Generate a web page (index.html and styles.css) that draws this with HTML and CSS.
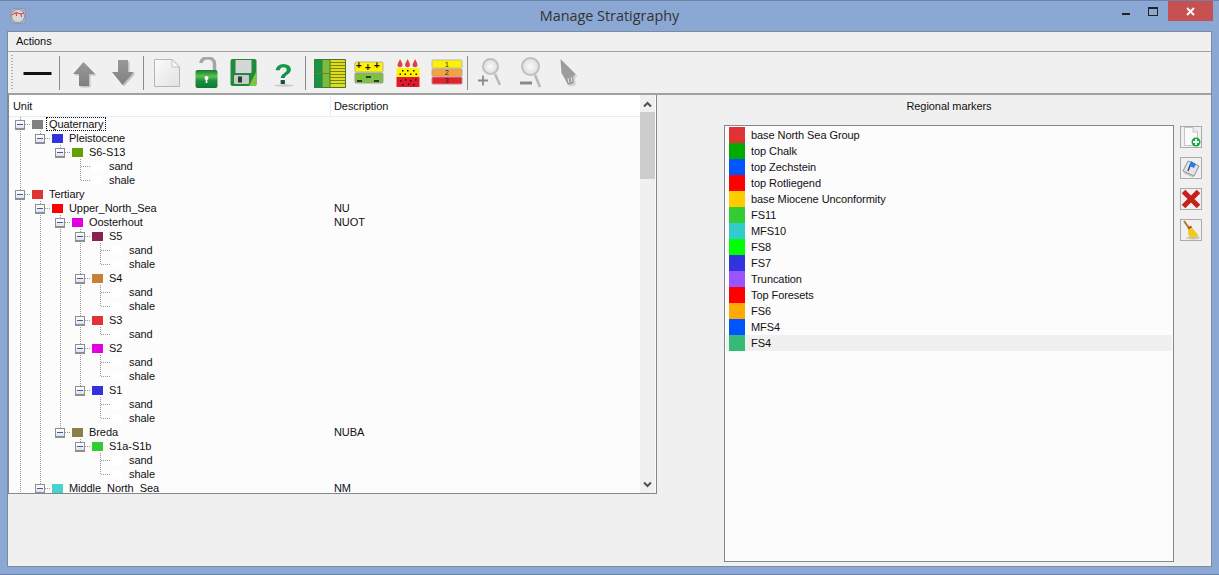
FILE: index.html
```html
<!DOCTYPE html>
<html lang="en">
<head>
  <meta charset="UTF-8">
  <title>Manage Stratigraphy</title>
  <link rel="stylesheet" href="styles.css">
</head>
<body>
<div class="window">

  <!-- title bar -->
  <div class="titlebar">
    <svg class="app-icon" width="16" height="16" viewBox="0 0 16 16">
      <rect x="0.5" y="0.5" width="15" height="15" rx="2" fill="#9fb0c9" stroke="#8a9ab2"/>
      <circle cx="8" cy="8" r="6.5" fill="#d8d8d8" stroke="#999"/>
      <path d="M2 7 L6 4.5 L11 6 L14 5 M6 4.5 L6.5 8 M11 6 L11.5 9" fill="none" stroke="#d8343a" stroke-width="1"/>
    </svg>
    <div class="title">Manage Stratigraphy</div>
    <div class="controls">
      <div class="ctl"><span class="ctl-min"></span></div>
      <div class="ctl"><span class="ctl-max"></span></div>
      <div class="ctl-close">
        <svg width="9" height="9" viewBox="0 0 9 9"><path d="M1 1 L8 8 M8 1 L1 8" stroke="#fff" stroke-width="2"/></svg>
      </div>
    </div>
  </div>

  <div class="client">
    <div class="menubar"><span>Actions</span></div>

    <!-- toolbar -->
    <div class="toolbar">
      <svg width="0" height="0" class="defs">
        <defs>
          <linearGradient id="arrowFill" x1="0" y1="0" x2="0" y2="1"><stop offset="0" stop-color="#999"/><stop offset="1" stop-color="#808080"/></linearGradient>
          <linearGradient id="pageFill" x1="0" y1="0" x2="1" y2="1"><stop offset="0" stop-color="#fbfbfb"/><stop offset="1" stop-color="#e2e2e2"/></linearGradient>
          <linearGradient id="lockFill" x1="0" y1="0" x2="0" y2="1"><stop offset="0" stop-color="#0f7a35"/><stop offset=".35" stop-color="#5cc04f"/><stop offset=".6" stop-color="#1a8f3f"/><stop offset="1" stop-color="#0f7a35"/></linearGradient>
          <linearGradient id="helpFill" x1="0" y1="0" x2="0" y2="1"><stop offset="0" stop-color="#12a84c"/><stop offset=".6" stop-color="#128c42"/><stop offset=".75" stop-color="#1a4f30"/><stop offset="1" stop-color="#1a4f30"/></linearGradient>
          <radialGradient id="lensFill"><stop offset="0" stop-color="#fafafa"/><stop offset="1" stop-color="#dedede"/></radialGradient>
        </defs>
      </svg>
      <div class="handle"></div>
      <div class="tool">
        <svg width="32" height="32" viewBox="0 0 32 32"><rect x="1.5" y="15" width="28" height="3" fill="#111"/></svg>
      </div>
      <div class="sep"></div>
      <div class="tool">
        <svg width="32" height="32" viewBox="0 0 32 32"><path d="M15.5 6 L27 18 L21 18 L21 30 L11 30 L11 18 L5 18 Z" fill="#c4c4c4" transform="translate(1.5 .5)"/><path d="M15.5 5 L27 17 L21 17 L21 29 L11 29 L11 17 L5 17 Z" fill="url(#arrowFill)"/></svg>
      </div>
      <div class="tool">
        <svg width="32" height="32" viewBox="0 0 32 32"><path d="M11 4 L21 4 L21 16 L27 16 L15.5 29 L5 16 L11 16 Z" fill="#c4c4c4" transform="translate(1.5 .5)"/><path d="M11 3 L21 3 L21 15 L27 15 L15.5 28 L5 15 L11 15 Z" fill="url(#arrowFill)"/></svg>
      </div>
      <div class="sep sep-tight"></div>
      <div class="tool">
        <svg width="32" height="32" viewBox="0 0 32 32"><path d="M3.5 2.500 L21 2.500 L28.500 10 L28.500 29.500 L3.500 29.500 Z" fill="url(#pageFill)" stroke="#b5b5b5"/><path d="M21 2.500 L21 10 L28.500 10 Z" fill="#f8f8f8" stroke="#c4c4c4"/></svg>
      </div>
      <div class="tool">
        <svg width="32" height="32" viewBox="0 0 32 32"><path d="M11 6 C11 -1 24.500 -1 24.500 7 L24.500 14" fill="none" stroke="#a6a6a6" stroke-width="3.500"/><rect x="5.500" y="13" width="22" height="18" rx="2" fill="url(#lockFill)"/><circle cx="16.500" cy="21" r="2" fill="#fff"/><rect x="15.700" y="21" width="1.600" height="5" fill="#fff"/></svg>
      </div>
      <div class="tool">
        <svg width="32" height="32" viewBox="0 0 32 32"><rect x="1.500" y="2" width="26" height="27" rx="2" fill="#1f8a3c"/><path d="M20 29 L27.500 14 L27.500 27 Q27.500 29 25.500 29 Z" fill="#7cc642"/><rect x="6.500" y="3" width="16" height="13" fill="#d6d6d6"/><rect x="5" y="18" width="15" height="9" rx="1" fill="#c9c9c9"/><rect x="9" y="19.500" width="4" height="6" fill="#23402c"/></svg>
      </div>
      <div class="tool">
        <svg width="32" height="32" viewBox="0 0 32 32"><ellipse cx="16" cy="28.500" rx="10" ry="1.200" fill="#c9c9c9"/><text x="15.500" y="27" text-anchor="middle" class="help-mark" fill="url(#helpFill)">?</text></svg>
      </div>
      <div class="sep"></div>
      <div class="tool">
        <svg width="32" height="32" viewBox="0 0 32 32">
          <rect x="0" y="2" width="8" height="29" fill="#169447"/>
          <rect x="8" y="2" width="8" height="29" fill="#7dbb3c"/>
          <rect x="16" y="2" width="16" height="29" fill="#e2dc1c"/>
          <path d="M0 16.500 H16 M16 5.500 H32 M16 8.500 H32 M16 11.500 H32 M16 14.500 H32 M16 17.500 H32 M16 20.500 H32 M16 23.500 H32 M16 26.500 H32" stroke="#7a8410" stroke-width="1" fill="none"/>
          <path d="M.5 2.500 H31.500 V30.500 H.5 Z M8 2 V31 M16 2 V31" stroke="#3f7a35" stroke-width="1" fill="none"/>
        </svg>
      </div>
      <div class="tool">
        <svg width="32" height="32" viewBox="0 0 32 32">
          <rect x="2" y="5" width="28" height="10" rx="1" fill="#fff200" stroke="#b5b5a0"/>
          <rect x="2" y="16" width="28" height="10" rx="1" fill="#7cc142" stroke="#9aa08a"/>
          <text x="6" y="12" text-anchor="middle" class="layer-sign">+</text>
          <text x="15" y="14" text-anchor="middle" class="layer-sign">+</text>
          <text x="24" y="12" text-anchor="middle" class="layer-sign">+</text>
          <path d="M4 24 H9 M13 20 H18 M21 24 H26" stroke="#111" stroke-width="1.500"/>
        </svg>
      </div>
      <div class="tool">
        <svg width="32" height="32" viewBox="0 0 32 32">
          <rect x="4.500" y="11" width="23" height="9" fill="#fff200"/>
          <rect x="4.500" y="20" width="23" height="10" fill="#e3182d"/>
          <path d="M8 2 C9.500 5 10.500 6.500 10.500 8 C10.500 11 5.500 11 5.500 8 C5.500 6.500 7 5 8 2 Z M15.500 2 C17 5 18 6.500 18 8 C18 11 13 11 13 8 C13 6.500 14.500 5 15.500 2 Z M23 2 C24.500 5 25.500 6.500 25.500 8 C25.500 11 20.500 11 20.500 8 C20.500 6.500 22 5 23 2 Z" fill="#d9453c"/>
          <path d="M10 13h1.500v1.500H10z M15 13h1.500v1.500H15z M21 13h1.500v1.500H21z M7.500 16.500h1.500V18H7.500z M12.500 16.500h1.500V18h-1.500z M18 16.500h1.500V18H18z M23.500 16.500h1.500V18h-1.500z M8 23h1.500v1.500H8z M13 22h1.500v1.500H13z M18 23h1.500v1.500H18z M23 22h1.500v1.500H23z M10 27h1.500v1.500H10z M16 26.500h1.500V28H16z M21 27h1.500v1.500H21z" fill="#111"/>
        </svg>
      </div>
      <div class="tool">
        <svg width="32" height="32" viewBox="0 0 32 32">
          <rect x="1" y="3" width="30" height="8" rx="1" fill="#fff200" stroke="#b9b9a8"/>
          <rect x="1" y="12" width="30" height="7" rx="1" fill="#f6a13c" stroke="#b9a48a"/>
          <rect x="1" y="20" width="30" height="7" rx="1" fill="#e8202a" stroke="#b98a8a"/>
          <text x="16" y="10" text-anchor="middle" class="layer-num">1</text>
          <text x="16" y="18" text-anchor="middle" class="layer-num">2</text>
          <text x="16" y="26" text-anchor="middle" class="layer-num">3</text>
        </svg>
      </div>
      <div class="sep sep-tight"></div>
      <div class="tool">
        <svg width="32" height="32" viewBox="0 0 32 32"><circle cx="15.500" cy="9.500" r="7.500" fill="url(#lensFill)" stroke="#c0c0c0" stroke-width="2"/><path d="M20 17 L25 28" stroke="#b8b8b8" stroke-width="2.500"/><path d="M3 23.500 H13 M8 18.500 V28.500" stroke="#8a8a8a" stroke-width="1.800"/></svg>
      </div>
      <div class="tool">
        <svg width="32" height="32" viewBox="0 0 32 32"><circle cx="16.500" cy="9.500" r="8.500" fill="url(#lensFill)" stroke="#c0c0c0" stroke-width="2"/><path d="M21 18 L26 30" stroke="#b8b8b8" stroke-width="2.500"/><path d="M6 26 H18" stroke="#8a8a8a" stroke-width="3"/></svg>
      </div>
      <div class="tool">
        <svg width="32" height="32" viewBox="0 0 32 32"><path d="M8.500 3 L23.500 18 L21 21 L22 27 L16 29 L13 23 L9.500 17 Z" fill="#d4d4d4" transform="translate(1 1)"/><path d="M7.500 2 L22.500 17 L20 20 L21 26 L15 28 L12 22 L8.500 16 Z" fill="#9c9c9c"/><path d="M15 21 L16 26 M18 20 L19 25" stroke="#e6e6e6" stroke-width="1"/></svg>
      </div>
    </div>

    <div class="main">
      <!-- stratigraphy tree -->
      <div class="tree-panel">
        <div class="tree">
          <div class="tree-head">
            <div class="col-unit">Unit</div>
            <div class="col-desc">Description</div>
          </div>
          <div class="tree-body">
            <div class="row"><i class="cell tee"><b class="exp"></b></i><span class="swatch" style="background:#808080"></span><span class="label focus">Quaternary</span></div>
            <div class="row"><i class="cell line"></i><i class="cell ell"><b class="exp"></b></i><span class="swatch" style="background:#3333dd"></span><span class="label">Pleistocene</span></div>
            <div class="row"><i class="cell line"></i><i class="cell"></i><i class="cell ell"><b class="exp"></b></i><span class="swatch" style="background:#66a000"></span><span class="label">S6-S13</span></div>
            <div class="row"><i class="cell line"></i><i class="cell"></i><i class="cell"></i><i class="cell tee"></i><span class="swatch white"></span><span class="label">sand</span></div>
            <div class="row"><i class="cell line"></i><i class="cell"></i><i class="cell"></i><i class="cell ell"></i><span class="swatch white"></span><span class="label">shale</span></div>

            <div class="row"><i class="cell tee"><b class="exp"></b></i><span class="swatch" style="background:#e03333"></span><span class="label">Tertiary</span></div>
            <div class="row"><i class="cell line"></i><i class="cell tee"><b class="exp"></b></i><span class="swatch" style="background:#ff0000"></span><span class="label">Upper_North_Sea</span><span class="desc">NU</span></div>
            <div class="row"><i class="cell line"></i><i class="cell line"></i><i class="cell tee"><b class="exp"></b></i><span class="swatch" style="background:#e000e0"></span><span class="label">Oosterhout</span><span class="desc">NUOT</span></div>

            <div class="row"><i class="cell line"></i><i class="cell line"></i><i class="cell line"></i><i class="cell tee"><b class="exp"></b></i><span class="swatch" style="background:#8a2050"></span><span class="label">S5</span></div>
            <div class="row"><i class="cell line"></i><i class="cell line"></i><i class="cell line"></i><i class="cell line"></i><i class="cell tee"></i><span class="swatch white"></span><span class="label">sand</span></div>
            <div class="row"><i class="cell line"></i><i class="cell line"></i><i class="cell line"></i><i class="cell line"></i><i class="cell ell"></i><span class="swatch white"></span><span class="label">shale</span></div>

            <div class="row"><i class="cell line"></i><i class="cell line"></i><i class="cell line"></i><i class="cell tee"><b class="exp"></b></i><span class="swatch" style="background:#c88038"></span><span class="label">S4</span></div>
            <div class="row"><i class="cell line"></i><i class="cell line"></i><i class="cell line"></i><i class="cell line"></i><i class="cell tee"></i><span class="swatch white"></span><span class="label">sand</span></div>
            <div class="row"><i class="cell line"></i><i class="cell line"></i><i class="cell line"></i><i class="cell line"></i><i class="cell ell"></i><span class="swatch white"></span><span class="label">shale</span></div>

            <div class="row"><i class="cell line"></i><i class="cell line"></i><i class="cell line"></i><i class="cell tee"><b class="exp"></b></i><span class="swatch" style="background:#e03333"></span><span class="label">S3</span></div>
            <div class="row"><i class="cell line"></i><i class="cell line"></i><i class="cell line"></i><i class="cell line"></i><i class="cell ell"></i><span class="swatch white"></span><span class="label">sand</span></div>

            <div class="row"><i class="cell line"></i><i class="cell line"></i><i class="cell line"></i><i class="cell tee"><b class="exp"></b></i><span class="swatch" style="background:#e000e0"></span><span class="label">S2</span></div>
            <div class="row"><i class="cell line"></i><i class="cell line"></i><i class="cell line"></i><i class="cell line"></i><i class="cell tee"></i><span class="swatch white"></span><span class="label">sand</span></div>
            <div class="row"><i class="cell line"></i><i class="cell line"></i><i class="cell line"></i><i class="cell line"></i><i class="cell ell"></i><span class="swatch white"></span><span class="label">shale</span></div>

            <div class="row"><i class="cell line"></i><i class="cell line"></i><i class="cell line"></i><i class="cell ell"><b class="exp"></b></i><span class="swatch" style="background:#3333dd"></span><span class="label">S1</span></div>
            <div class="row"><i class="cell line"></i><i class="cell line"></i><i class="cell line"></i><i class="cell"></i><i class="cell tee"></i><span class="swatch white"></span><span class="label">sand</span></div>
            <div class="row"><i class="cell line"></i><i class="cell line"></i><i class="cell line"></i><i class="cell"></i><i class="cell ell"></i><span class="swatch white"></span><span class="label">shale</span></div>

            <div class="row"><i class="cell line"></i><i class="cell line"></i><i class="cell ell"><b class="exp"></b></i><span class="swatch" style="background:#8a8048"></span><span class="label">Breda</span><span class="desc">NUBA</span></div>
            <div class="row"><i class="cell line"></i><i class="cell line"></i><i class="cell"></i><i class="cell ell"><b class="exp"></b></i><span class="swatch" style="background:#33cc33"></span><span class="label">S1a-S1b</span></div>
            <div class="row"><i class="cell line"></i><i class="cell line"></i><i class="cell"></i><i class="cell"></i><i class="cell tee"></i><span class="swatch white"></span><span class="label">sand</span></div>
            <div class="row"><i class="cell line"></i><i class="cell line"></i><i class="cell"></i><i class="cell"></i><i class="cell ell"></i><span class="swatch white"></span><span class="label">shale</span></div>

            <div class="row"><i class="cell line"></i><i class="cell tee"><b class="exp"></b></i><span class="swatch" style="background:#48d4cc"></span><span class="label">Middle_North_Sea</span><span class="desc">NM</span></div>
          </div>
          <div class="scrollbar">
            <svg class="chevron" width="9" height="7" viewBox="0 0 9 7"><path d="M1 5.500 L4.500 2 L8 5.500" fill="none" stroke="#505050" stroke-width="2"/></svg>
            <div class="thumb"></div>
            <svg class="chevron chevron-down" width="9" height="7" viewBox="0 0 9 7"><path d="M1 1.500 L4.500 5 L8 1.500" fill="none" stroke="#505050" stroke-width="2"/></svg>
          </div>
        </div>
      </div>

      <!-- regional markers -->
      <div class="markers">
        <div class="markers-title">Regional markers</div>
        <div class="markers-body">
          <div class="marker-list">
            <div class="marker"><span class="marker-color" style="background:#e03333"></span>base North Sea Group</div>
            <div class="marker"><span class="marker-color" style="background:#00aa00"></span>top Chalk</div>
            <div class="marker"><span class="marker-color" style="background:#0055ff"></span>top Zechstein</div>
            <div class="marker"><span class="marker-color" style="background:#ff0000"></span>top Rotliegend</div>
            <div class="marker"><span class="marker-color" style="background:#ffcc00"></span>base Miocene Unconformity</div>
            <div class="marker"><span class="marker-color" style="background:#33cc33"></span>FS11</div>
            <div class="marker"><span class="marker-color" style="background:#33cccc"></span>MFS10</div>
            <div class="marker"><span class="marker-color" style="background:#00ff00"></span>FS8</div>
            <div class="marker"><span class="marker-color" style="background:#3333dd"></span>FS7</div>
            <div class="marker"><span class="marker-color" style="background:#9955ff"></span>Truncation</div>
            <div class="marker"><span class="marker-color" style="background:#ff0000"></span>Top Foresets</div>
            <div class="marker"><span class="marker-color" style="background:#ffaa00"></span>FS6</div>
            <div class="marker"><span class="marker-color" style="background:#0055ff"></span>MFS4</div>
            <div class="marker selected"><span class="marker-color" style="background:#33bb77"></span>FS4</div>
          </div>
          <div class="side-buttons">
            <div class="side-btn">
              <svg width="20" height="20" viewBox="0 0 20 20"><path d="M3.500 .500 L12 .500 L16.500 5 L16.500 18.500 L3.500 18.500 Z" fill="#fafafa" stroke="#c4c4c4"/><path d="M12 .500 L12 5 L16.500 5" fill="#eee" stroke="#c4c4c4"/><circle cx="15" cy="15" r="4.500" fill="#16a83c"/><path d="M15 12 V18 M12 15 H18" stroke="#fff" stroke-width="1.800"/></svg>
            </div>
            <div class="side-btn">
              <svg width="20" height="20" viewBox="0 0 20 20"><path d="M7 3 L18 8 L13 18 L2 13 Z" fill="#e4e4e4" stroke="#8f8f8f"/><path d="M3 15 L13 19" stroke="#b5b5b5"/><path d="M7 13 L10 5" stroke="#1d4fb5" stroke-width="1.500"/><path d="M10 3 L15 6 L13 10 L8.500 8 Z" fill="#2a7de0"/></svg>
            </div>
            <div class="side-btn">
              <svg width="20" height="20" viewBox="0 0 20 20"><path d="M2.500 2.500 L17.500 17.500 M17.500 2.500 L2.500 17.500" stroke="#c8201c" stroke-width="5"/></svg>
            </div>
            <div class="side-btn">
              <svg width="20" height="20" viewBox="0 0 20 20"><ellipse cx="12" cy="18" rx="7" ry="1.500" fill="#c5c5c5"/><path d="M3 1 L8 8" stroke="#a87a30" stroke-width="2"/><path d="M7 8.500 L10.500 6.500 L18 16.500 L8.500 18 L7 13 Z" fill="#f0c828"/><path d="M7 8.500 L10.500 6.500" stroke="#c83030" stroke-width="2"/></svg>
            </div>
          </div>
        </div>
      </div>
    </div>
  </div>
</div>
</body>
</html>
```

FILE: styles.css
```css
html, body {
  margin: 0;
  padding: 0;
  height: 100%;
  overflow: hidden;
}

body {
  font-family: "Liberation Sans", Arial, sans-serif;
  font-size: 11px;
  letter-spacing: -0.07px;
  color: #111;
}

.window {
  height: 100%;
  box-sizing: border-box;
  display: flex;
  flex-direction: column;
  background: #8aa8d3;
  border-top: 1px solid #6a83aa;
  border-bottom: 1px solid #6a83aa;
  padding: 0 7px 7px 7px;
}

/* title bar */
.titlebar {
  height: 30px;
  flex: none;
  display: flex;
  align-items: flex-start;
  position: relative;
}

.app-icon {
  margin: 7px 0 0 3px;
}

.title {
  position: absolute;
  left: 0;
  right: 0;
  top: 5px;
  text-align: center;
  font-family: "Open Sans", sans-serif;
  font-size: 14.4px;
  letter-spacing: 0;
  line-height: 19px;
  color: #333;
}

.controls {
  margin-left: auto;
  display: flex;
}

.ctl {
  width: 26px;
  height: 20px;
  position: relative;
}

.ctl-min {
  position: absolute;
  left: 3px;
  top: 12px;
  width: 8px;
  height: 2px;
  background: #222;
}

.ctl-max {
  position: absolute;
  left: 3px;
  top: 6px;
  width: 8px;
  height: 6px;
  border: 1px solid #222;
  border-top-width: 2px;
}

.ctl-close {
  width: 45px;
  height: 20px;
  margin-left: -3px;
  margin-right: -1px;
  background: #c75050;
  display: flex;
  align-items: center;
  justify-content: center;
}

/* client area */
.client {
  flex: 1;
  min-height: 0;
  display: flex;
  flex-direction: column;
  background: #f0f0f0;
  border: 1px solid #7d8a9c;
}

.menubar {
  height: 19px;
  flex: none;
  line-height: 19px;
  padding-left: 8px;
  border-bottom: 1px solid #a0a0a0;
}

.toolbar {
  height: 43px;
  flex: none;
  box-sizing: border-box;
  display: flex;
  align-items: flex-start;
  padding: 5px 0 0 3px;
  border-bottom: 2px solid #a0a0a0;
}

.defs {
  position: absolute;
}

.handle {
  width: 2px;
  height: 35px;
  margin-right: 5px;
  background: repeating-linear-gradient(#b0b0b0 0 1px, transparent 1px 3px);
  margin-top: -2px;
}

.tool {
  width: 39px;
  height: 32px;
  display: flex;
  justify-content: center;
}

.tool svg {
  filter: blur(0.35px);
}

.sep {
  width: 1px;
  height: 34px;
  margin: -1px 4px 0 2px;
  background: #8c8c8c;
}

.sep-tight {
  margin-left: 1px;
  margin-right: 3px;
}

.help-mark {
  font-family: "Liberation Sans", sans-serif;
  font-weight: bold;
  font-size: 30px;
}

.layer-sign {
  font-family: "Liberation Sans", sans-serif;
  font-weight: bold;
  font-size: 10px;
  fill: #111;
}

.layer-num {
  font-family: "Liberation Sans", sans-serif;
  font-size: 7px;
  fill: #222;
}

.main {
  flex: 1;
  min-height: 0;
  display: flex;
}

/* tree */
.tree-panel {
  width: 649px;
  flex: none;
}

.tree {
  height: 399px;
  box-sizing: border-box;
  border: 1px solid #828790;
  border-top: none;
  background: #fcfcfc;
  position: relative;
  overflow: hidden;
}

.tree-head {
  height: 22px;
  box-sizing: border-box;
  display: flex;
  line-height: 22px;
  background: #fff;
  border-bottom: 1px solid #e4ecfa;
}

.col-unit {
  width: 322px;
  padding-left: 4px;
  box-sizing: border-box;
  border-right: 1px solid #e4ecfa;
}

.col-desc {
  padding-left: 3px;
}

.tree-body {
  padding-left: 1px;
}

.row {
  height: 14px;
  line-height: 14px;
  display: flex;
  align-items: flex-start;
  position: relative;
  white-space: nowrap;
}

.cell {
  width: 20px;
  height: 14px;
  flex: none;
  display: block;
  position: relative;
}

.line {
  background: repeating-linear-gradient(#999 0 1px, transparent 1px 2px) 10px 0 / 1px 14px no-repeat;
}

.tee {
  background:
    repeating-linear-gradient(#999 0 1px, transparent 1px 2px) 10px 0 / 1px 14px no-repeat,
    repeating-linear-gradient(90deg, #999 0 1px, transparent 1px 2px) 11px 7px / 9px 1px no-repeat;
}

.ell {
  background:
    repeating-linear-gradient(#999 0 1px, transparent 1px 2px) 10px 0 / 1px 8px no-repeat,
    repeating-linear-gradient(90deg, #999 0 1px, transparent 1px 2px) 11px 7px / 9px 1px no-repeat;
}

.exp {
  position: absolute;
  left: 5px;
  top: 3px;
  width: 8px;
  height: 7px;
  border: 1px solid #8f8f8f;
  border-bottom-width: 2px;
  background: linear-gradient(#fff, #dfe3ea);
}

.exp::after {
  content: "";
  position: absolute;
  left: 1px;
  top: 3px;
  width: 6px;
  height: 1px;
  background: #3a5ea8;
}

.swatch {
  width: 11px;
  height: 9px;
  flex: none;
  margin: 3px 0 0 2px;
}

.swatch.white {
  background: #fff;
}

.label {
  margin-left: 6px;
}

.label.focus {
  outline: 1px dotted #111;
  outline-offset: -1px;
  padding: 0 3px;
  margin-left: 3px;
  height: 14px;
}

/* description column, taken out of the row's flow so it lines up under the header */
.desc {
  position: absolute;
  top: 0;
  left: 324px;
}

.scrollbar {
  position: absolute;
  right: 1px;
  top: 0;
  bottom: 0;
  width: 15px;
  background: #f0f0f0;
  display: flex;
  flex-direction: column;
  align-items: center;
}

.chevron {
  margin-top: 6px;
  height: 7px;
  flex: none;
}

.chevron-down {
  margin-top: auto;
  margin-bottom: 5px;
}

.thumb {
  width: 15px;
  height: 67px;
  margin-top: 4px;
  background: #cdcdcd;
}

/* markers */
.markers {
  flex: 1;
  padding-left: 67px;
}

.markers-title {
  width: 450px;
  height: 30px;
  line-height: 22px;
  text-align: center;
}

.markers-body {
  display: flex;
  align-items: flex-start;
  gap: 6px;
}

.marker-list {
  width: 450px;
  height: 437px;
  box-sizing: border-box;
  border: 1px solid #828790;
  background: #fcfcfc;
  padding: 1px 1px 0 1px;
}

.marker {
  height: 16px;
  line-height: 16px;
  display: flex;
}

.marker.selected {
  background: #f0f0f0;
}

.marker-color {
  width: 16px;
  height: 16px;
  flex: none;
  margin: 0 6px 0 3px;
}

.side-buttons {
  display: flex;
  flex-direction: column;
  gap: 9px;
  margin-top: 1px;
}

.side-btn {
  width: 20px;
  height: 20px;
  border: 1px solid #ababab;
  background: #f0f0f0;
}
```
